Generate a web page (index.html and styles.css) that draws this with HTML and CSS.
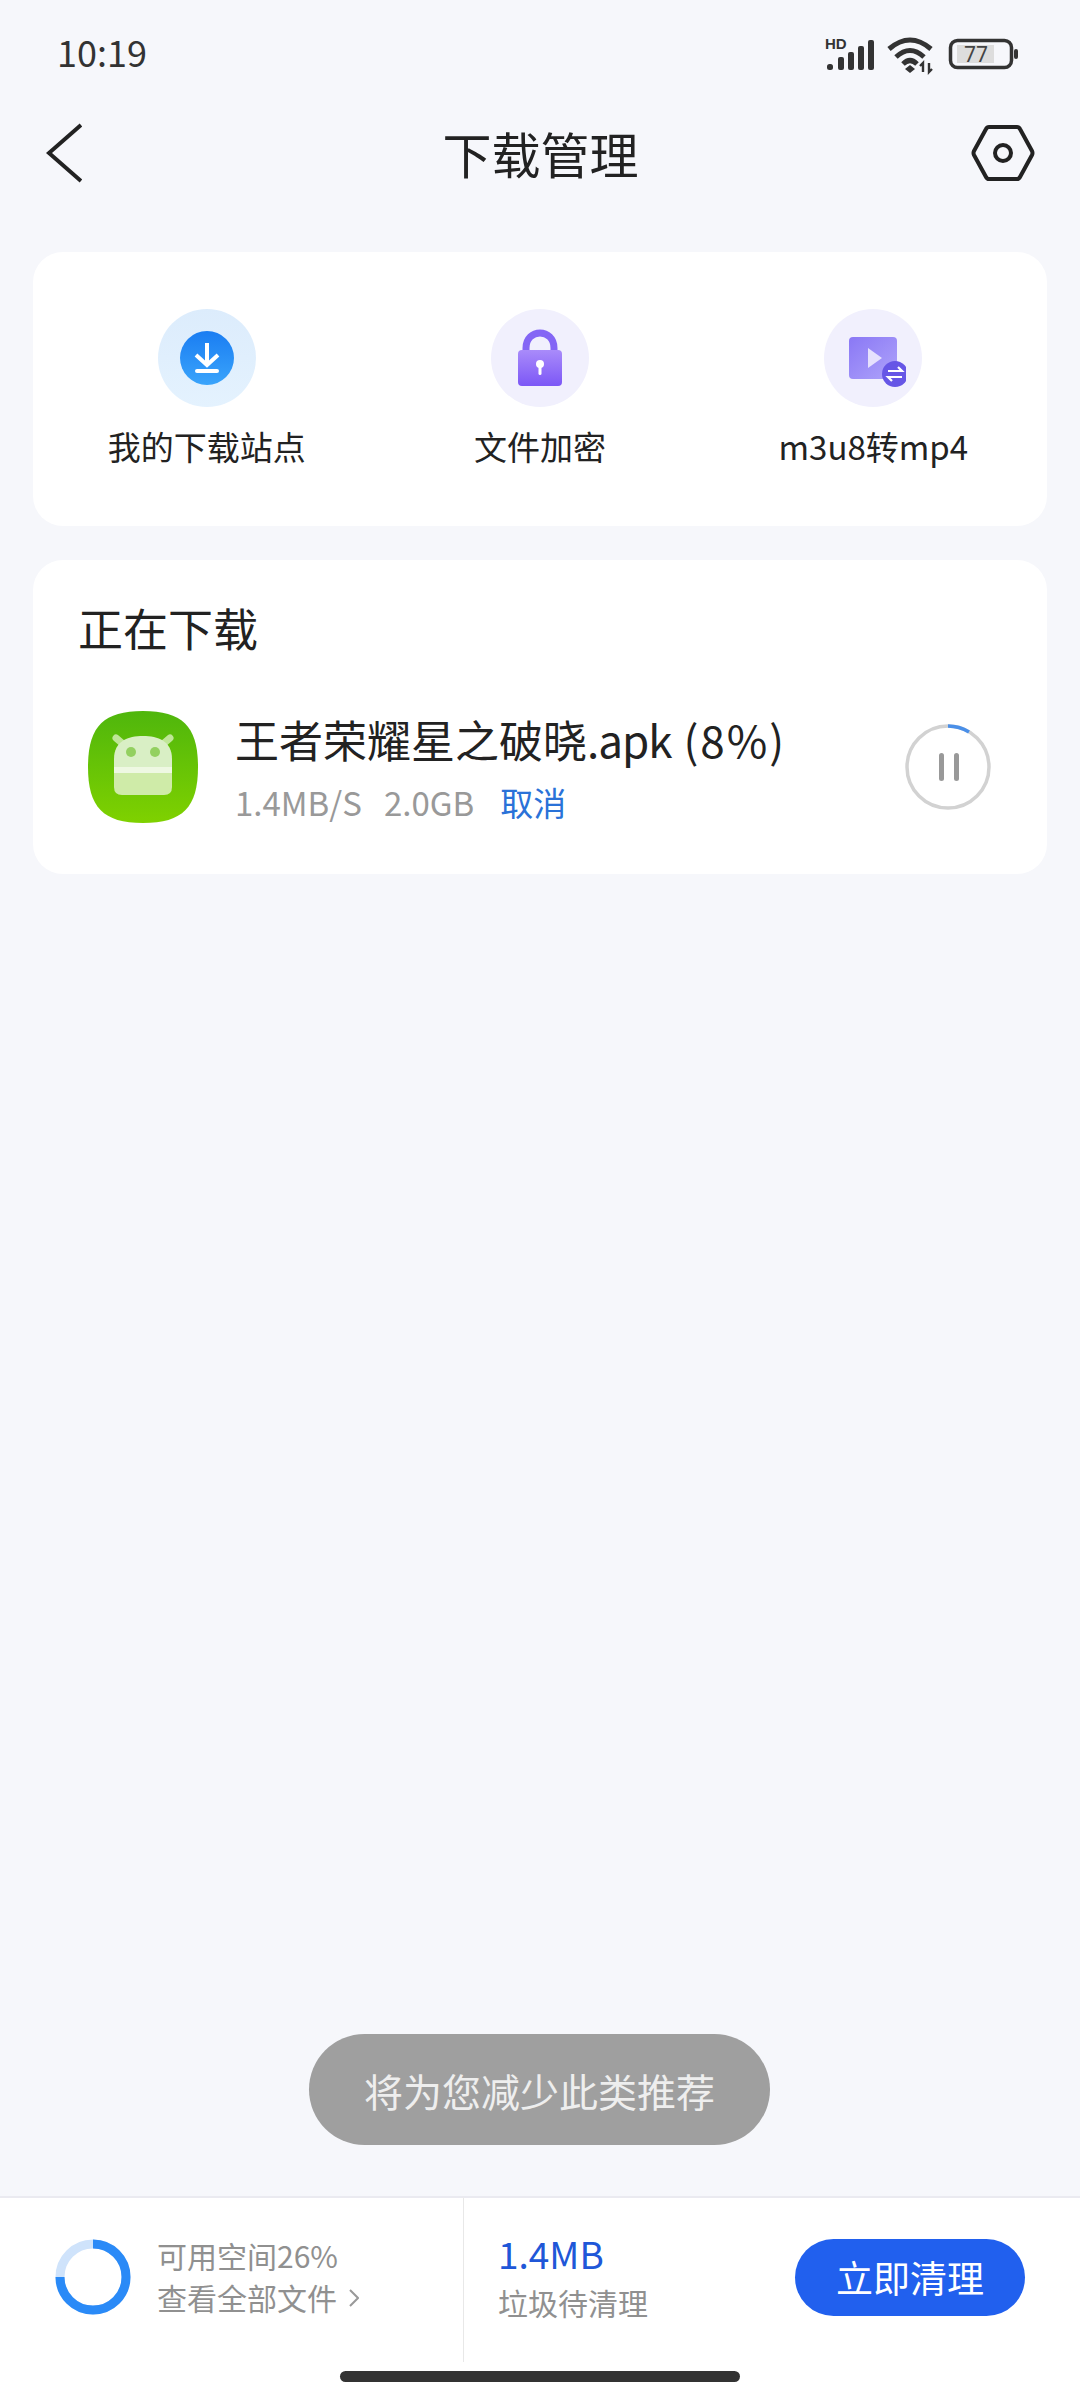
FILE: index.html
```html
<!DOCTYPE html>
<html>
<head>
    <meta charset="utf-8" />
    <title>下载管理</title>
    <link rel="stylesheet" href="styles.css">
</head>
<body>
    <div class="status">
        <span class="time">10:19</span>
        <svg class="status-icons" width="195" height="40" viewBox="0 0 195 40">
            <text x="0" y="13" class="hd">HD</text>
            <g fill="#333">
                <rect x="2" y="28" width="6" height="6" rx="2.5" />
                <rect x="13" y="21" width="6" height="13" rx="2" />
                <rect x="23" y="16" width="6" height="18" rx="2" />
                <rect x="33" y="10" width="6" height="24" rx="2" />
                <rect x="43" y="4" width="6" height="30" rx="2" />
            </g>
            <g fill="none" stroke="#333" stroke-width="5">
                <path d="M64 13 Q85 -5 106 13" />
                <path d="M71 21 Q85 8 99 21" />
                <path d="M78 28 Q85 21 92 28" />
            </g>
            <path d="M85 29 L90 33 L85 37 L80 33 Z" fill="#333" />
            <path d="M98 36 V28 M95 30 L98 27 L98 30 M104 27 V35 M107 33 L104 36 L104 33" fill="none" stroke="#333" stroke-width="2.4" />
            <rect x="125.5" y="4.5" width="61" height="27" rx="7" fill="none" stroke="#333" stroke-width="3.5" />
            <rect x="132" y="9" width="37" height="18" fill="#ddd" />
            <text x="151" y="26" class="batt">77</text>
            <rect x="189" y="13" width="4" height="10" rx="2" fill="#333" />
        </svg>
    </div>

    <div class="header">
        <svg class="back" width="36" height="60" viewBox="0 0 36 60">
            <path d="M35 2 L3 30 L35 58" fill="none" stroke="#222" stroke-width="4" />
        </svg>
        <h1>下载管理</h1>
        <svg width="64" height="58" viewBox="0 0 64 58">
            <path d="M18 3 H46 Q48 3 49 5 L61 27 Q62 29 61 31 L49 53 Q48 55 46 55 H18 Q16 55 15 53 L3 31 Q2 29 3 27 L15 5 Q16 3 18 3 Z" fill="none" stroke="#222" stroke-width="4" />
            <circle cx="32" cy="29" r="8" fill="none" stroke="#222" stroke-width="4" />
        </svg>
    </div>

    <div class="main">
        <div class="card tools">
            <div class="tool">
                <div class="tool-bg bg-blue">
                    <svg width="54" height="54" viewBox="0 0 54 54">
                        <defs>
                            <linearGradient id="g-blue" x1="0" y1="0" x2="0" y2="1">
                                <stop offset="0" stop-color="#1a7df2" />
                                <stop offset="1" stop-color="#3aa4fb" />
                            </linearGradient>
                        </defs>
                        <circle cx="27" cy="27" r="27" fill="url(#g-blue)" />
                        <path d="M27 12 V32 M16 24 L27 34 L38 24" fill="none" stroke="#fff" stroke-width="4" />
                        <rect x="15" y="38" width="24" height="4" rx="2" fill="#fff" />
                    </svg>
                </div>
                <p>我的下载站点</p>
            </div>
            <div class="tool">
                <div class="tool-bg bg-violet">
                    <svg width="50" height="58" viewBox="0 0 50 58">
                        <defs>
                            <linearGradient id="g-lock" x1="0" y1="0" x2="0" y2="1">
                                <stop offset="0" stop-color="#a98bfa" />
                                <stop offset="1" stop-color="#7c57f6" />
                            </linearGradient>
                        </defs>
                        <path d="M11 24 V19 C11 -1 39 -1 39 19 V24" fill="none" stroke="#8466f5" stroke-width="7" />
                        <rect x="3" y="21" width="44" height="36" rx="4" fill="url(#g-lock)" />
                        <circle cx="25" cy="35" r="4" fill="#fff" />
                        <rect x="23.5" y="36" width="3" height="10" rx="1.5" fill="#fff" />
                    </svg>
                </div>
                <p>文件加密</p>
            </div>
            <div class="tool">
                <div class="tool-bg bg-violet">
                    <svg width="66" height="66" viewBox="0 0 66 66">
                        <defs>
                            <linearGradient id="g-video" x1="0" y1="0" x2="1" y2="1">
                                <stop offset="0" stop-color="#8a78f5" />
                                <stop offset="1" stop-color="#aea3fa" />
                            </linearGradient>
                        </defs>
                        <rect x="9" y="12" width="48" height="42" rx="4" fill="url(#g-video)" />
                        <path d="M28 23 L42 33 L28 43 Z" fill="#e6e1fd" />
                        <circle cx="55" cy="49" r="13" fill="#6656e6" />
                        <path d="M48 46 H62 L58 42 M62 52 H48 L52 56" fill="none" stroke="#fff" stroke-width="2.2" />
                    </svg>
                </div>
                <p>m3u8转mp4</p>
            </div>
        </div>

        <div class="card downloads">
            <h2>正在下载</h2>
            <div class="item">
                <svg class="app" width="110" height="112" viewBox="0 0 110 112">
                    <defs>
                        <linearGradient id="g-app" x1="0" y1="0" x2="0" y2="1">
                            <stop offset="0" stop-color="#4fb60c" />
                            <stop offset="1" stop-color="#7fd100" />
                        </linearGradient>
                    </defs>
                    <path d="M55 0 C95 0 110 16 110 56 C110 96 95 112 55 112 C15 112 0 96 0 56 C0 16 15 0 55 0 Z" fill="url(#g-app)" />
                    <path d="M28 27 L35 33 M82 27 L75 33" stroke="#bfe697" stroke-width="7" stroke-linecap="round" />
                    <path d="M26 56 V48 C26 30 40 25 55 25 C70 25 84 30 84 48 V56 Z" fill="#d9efc5" />
                    <rect x="26" y="56" width="58" height="6" fill="#eef8e2" />
                    <path d="M26 62 H84 V76 Q84 84 76 84 H34 Q26 84 26 76 Z" fill="#cfeba8" />
                    <circle cx="43" cy="41" r="5" fill="#93d060" />
                    <circle cx="67" cy="41" r="5" fill="#93d060" />
                </svg>
                <div class="info">
                    <div class="name">王者荣耀星之破晓<span class="ext">.apk</span> <span class="pct">(8%)</span></div>
                    <div class="meta">
                        <span>1.4MB/S</span>
                        <span>2.0GB</span>
                        <span class="cancel">取消</span>
                    </div>
                </div>
                <svg class="pause" width="88" height="88" viewBox="0 0 88 88">
                    <circle cx="44" cy="44" r="41" fill="none" stroke="#d2d2d2" stroke-width="3.5" />
                    <path d="M44 3 A41 41 0 0 1 65 9" fill="none" stroke="#4a8fe8" stroke-width="3.5" />
                    <rect x="35" y="30" width="5" height="28" rx="2.5" fill="#999" />
                    <rect x="50" y="30" width="5" height="28" rx="2.5" fill="#999" />
                </svg>
            </div>
        </div>

        <div class="toast">将为您减少此类推荐</div>
    </div>

    <div class="footer">
        <div class="bar">
            <div class="space">
                <svg width="76" height="76" viewBox="0 0 76 76">
                    <circle cx="38" cy="38" r="33" fill="none" stroke="#cfe3fb" stroke-width="9" />
                    <path d="M38 5 A33 33 0 1 1 5 38" fill="none" stroke="#2a8af7" stroke-width="9" />
                </svg>
                <div class="space-text">
                    <p>可用空间26%</p>
                    <p class="all">查看全部文件
                        <svg class="more" width="11" height="18" viewBox="0 0 11 18">
                            <path d="M2 1 L10 9 L2 17" fill="none" stroke="#999" stroke-width="2" />
                        </svg>
                    </p>
                </div>
            </div>
            <div class="clean">
                <div class="clean-text">
                    <div class="size">1.4MB</div>
                    <p>垃圾待清理</p>
                </div>
                <button type="button" class="btn">立即清理</button>
            </div>
        </div>
        <div class="home"></div>
    </div>
</body>
</html>
```

FILE: styles.css
```css
* {
    box-sizing: border-box;
}

html, body {
    margin: 0;
    padding: 0;
}

body {
    width: 1080px;
    height: 2400px;
    overflow: hidden;
    display: flex;
    flex-direction: column;
    background: #f6f7fb;
    color: #222;
    font-family: "Noto Sans CJK SC", "Noto Sans", sans-serif;
}

p, h1, h2 {
    margin: 0;
    font-weight: 400;
}

.status {
    height: 105px;
    padding: 0 60px 0 57px;
    display: flex;
    justify-content: space-between;
    align-items: center;
}

.time {
    font-size: 36px;
    line-height: 50px;
    margin-bottom: 3px;
    color: #333;
}

.status-icons {
    margin-top: 6px;
}

.hd {
    font-family: "Liberation Sans", sans-serif;
    font-size: 15px;
    font-weight: 700;
    fill: #333;
}

.batt {
    font-family: "Noto Sans", sans-serif;
    font-size: 21px;
    fill: #444;
    text-anchor: middle;
}

.header {
    height: 95px;
    margin-bottom: 52px;
    padding: 0 45px 0 46px;
    display: flex;
    align-items: center;
}

.back {
    margin-right: 28px;
}

.header h1 {
    flex: 1;
    text-align: center;
    font-size: 49px;
}

.main {
    flex: 1;
    position: relative;
    padding: 0 33px;
}

.card {
    background: #fff;
    border-radius: 30px;
}

.tools {
    height: 274px;
    padding: 57px 7px 0;
    margin-bottom: 34px;
    display: grid;
    grid-template-columns: repeat(3, 1fr);
}

.tool {
    display: flex;
    flex-direction: column;
    align-items: center;
}

.tool p {
    margin-top: 16px;
    font-size: 33px;
    line-height: 46px;
}

.tool-bg {
    width: 98px;
    height: 98px;
    border-radius: 50%;
    display: flex;
    align-items: center;
    justify-content: center;
}

.bg-blue {
    background: linear-gradient(#dcecfc, #e4f2fe);
}

.bg-violet {
    background: #f1f0fd;
}

.downloads {
    height: 314px;
    padding: 36px 55px 0 46px;
}

.downloads h2 {
    margin-left: -1px;
    font-size: 45px;
    line-height: 64px;
}

.item {
    margin-top: 49px;
    display: flex;
    align-items: center;
}

.app {
    margin-left: 9px;
    flex: none;
}

.info {
    flex: 1;
    margin-left: 37px;
}

.name {
    font-size: 44px;
    line-height: 60px;
}

.ext {
    letter-spacing: -1px;
}

.pct {
    margin-left: 2px;
    letter-spacing: 2px;
}

.meta {
    margin-top: 10px;
    font-size: 33px;
    line-height: 46px;
    color: #999;
    display: flex;
    gap: 22px;
}

.cancel {
    margin-left: 4px;
    color: #2a72d8;
}

.pause {
    flex: none;
}

.toast {
    position: absolute;
    left: 309px;
    bottom: 51px;
    width: 461px;
    height: 111px;
    border-radius: 56px;
    background: #9f9f9f;
    color: #eee;
    font-size: 39px;
    display: flex;
    align-items: center;
    justify-content: center;
}

.footer {
    height: 204px;
    background: #fff;
    border-top: 2px solid #eaeaf0;
}

.bar {
    height: 164px;
    display: flex;
}

.space {
    width: 464px;
    padding: 0 0 6px 55px;
    border-right: 1px solid #e8e8e8;
    display: flex;
    align-items: center;
    gap: 26px;
}

.space-text {
    margin-bottom: 2px;
    font-size: 30px;
    line-height: 42px;
    color: #909090;
}

.all {
    display: flex;
    align-items: center;
    gap: 11px;
}

.more {
    margin-top: 2px;
}

.clean {
    flex: 1;
    padding: 0 55px 6px 34px;
    display: flex;
    justify-content: space-between;
    align-items: center;
}

.clean-text {
    margin-bottom: 3px;
    color: #909090;
    font-size: 30px;
    line-height: 42px;
}

.size {
    margin-bottom: 3px;
    font-size: 37px;
    line-height: 50px;
    color: #2057d8;
}

.btn {
    width: 230px;
    height: 77px;
    border: 0;
    border-radius: 39px;
    background: #2160ee;
    color: #fff;
    font-family: inherit;
    font-size: 37px;
}

.home {
    width: 400px;
    height: 11px;
    margin: 9px auto 0;
    border-radius: 6px;
    background: #333;
}
```
